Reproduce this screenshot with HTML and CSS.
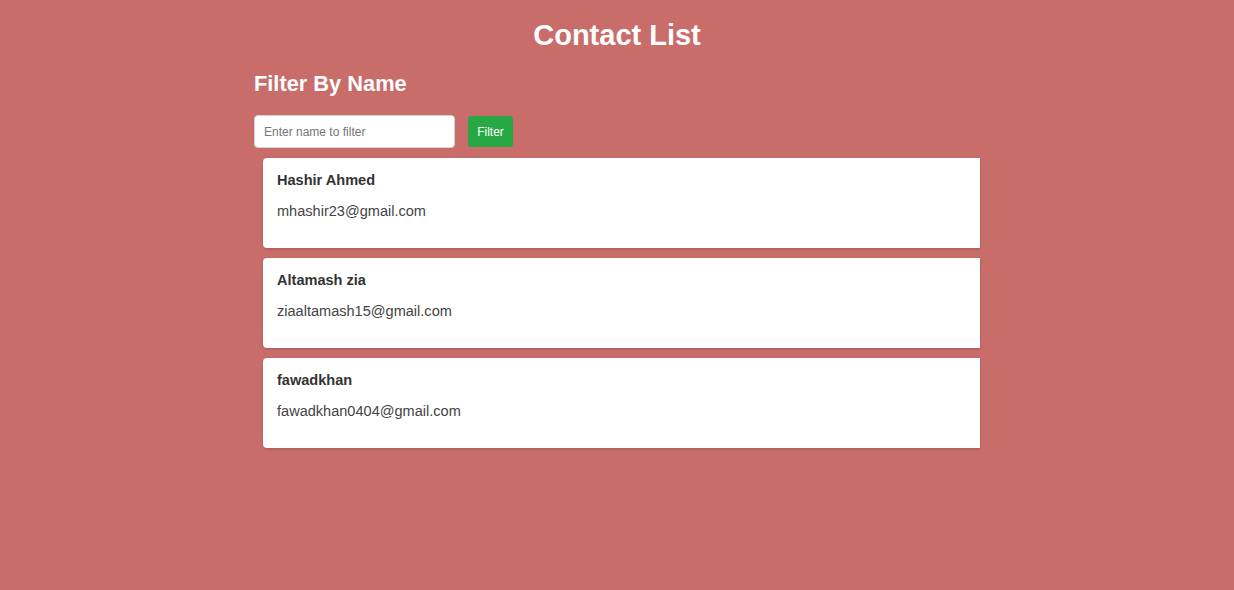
FILE: index.html
```html
<!DOCTYPE html>
<html lang="en">
<head>
<meta charset="utf-8">
<title>Contact List</title>
<link rel="stylesheet" href="styles.css">
</head>
<body>
  <div class="container">
    <h1 class="title">Contact List</h1>
    <h2 class="subtitle">Filter By Name</h2>
    <form class="filter-row">
      <input class="filter-input" type="text" placeholder="Enter name to filter">
      <button class="filter-btn" type="button">Filter</button>
    </form>
    <div class="list">
      <div class="card">
        <p class="name">Hashir Ahmed</p>
        <p class="email">mhashir23@gmail.com</p>
      </div>
      <div class="card">
        <p class="name">Altamash zia</p>
        <p class="email">ziaaltamash15@gmail.com</p>
      </div>
      <div class="card">
        <p class="name">fawadkhan</p>
        <p class="email">fawadkhan0404@gmail.com</p>
      </div>
    </div>
  </div>
</body>
</html>
```

FILE: styles.css
```css
html, body {
  margin: 0;
  padding: 0;
}
body {
  background: #c96d6b;
  font-family: "Liberation Sans", Arial, sans-serif;
  color: #333;
  min-height: 590px;
}
.container {
  width: 726px;
  margin: 0 auto;
  padding-top: 17px;
}
.title {
  margin: 0;
  font-size: 29px;
  line-height: 36px;
  font-weight: bold;
  color: #fff;
  text-align: center;
}
.subtitle {
  margin: 18px 0 0;
  font-size: 21.8px;
  line-height: 26px;
  font-weight: bold;
  color: #fff;
}
.filter-row {
  display: flex;
  align-items: center;
  gap: 13px;
  margin-top: 18px;
}
.filter-input {
  box-sizing: border-box;
  width: 201px;
  height: 33px;
  padding: 0 9px;
  border: 1px solid #d9d2d2;
  border-radius: 4px;
  background: #fff;
  font-family: "Liberation Sans", Arial, sans-serif;
  font-size: 12px;
  color: #333;
  outline: none;
}
.filter-input::placeholder {
  color: #757575;
}
.filter-btn {
  box-sizing: border-box;
  width: 45px;
  height: 31px;
  padding: 0;
  border: none;
  border-radius: 3px;
  background: #28a745;
  color: #fff;
  font-family: "Liberation Sans", Arial, sans-serif;
  font-size: 12px;
}
.list {
  display: flex;
  flex-direction: column;
  gap: 10px;
  margin-top: 10px;
  padding-left: 9px;
}
.card {
  box-sizing: border-box;
  height: 90px;
  padding: 14px 14px;
  background: #fff;
  border-radius: 4px 0 0 4px;
  box-shadow: 0 1px 3px rgba(0, 0, 0, 0.18);
}
.name {
  margin: 0;
  font-size: 14.56px;
  line-height: 17px;
  font-weight: bold;
  color: #333;
}
.email {
  margin: 14px 0 0;
  font-size: 14.56px;
  line-height: 17px;
  color: #444;
}
```
